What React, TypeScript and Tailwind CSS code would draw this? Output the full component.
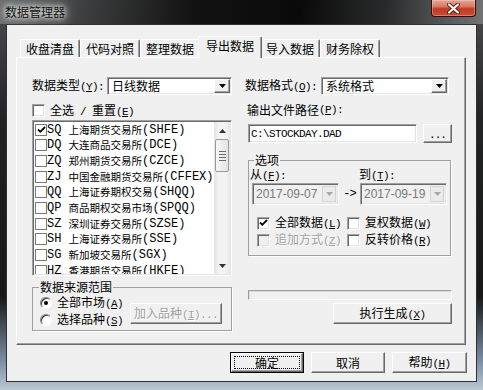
import React from "react";

const L = ({ children }: { children: React.ReactNode }) => (
  <span className="font-['Liberation_Mono',monospace] text-[11px] tracking-[-0.6px]">{children}</span>
);

const Acc = ({ k }: { k: string }) => (
  <L>
    (<span className="underline underline-offset-[1px]">{k}</span>)
  </L>
);

const SUNKEN =
  "border border-t-[#a0a0a0] border-l-[#a0a0a0] border-r-white border-b-white shadow-[inset_1px_1px_0_#696969,inset_-1px_-1px_0_#e3e3e3]";
const RAISED =
  "border border-t-white border-l-white border-r-[#696969] border-b-[#696969] shadow-[inset_-1px_-1px_0_#a0a0a0]";

function DownTri({ color = "#000" }: { color?: string }) {
  return (
    <svg width="7" height="4" viewBox="0 0 7 4">
      <path d="M0 0 H7 L3.5 4 Z" fill={color} />
    </svg>
  );
}

function UpTri() {
  return (
    <svg width="7" height="4" viewBox="0 0 7 4">
      <path d="M0 4 H7 L3.5 0 Z" fill="#333" />
    </svg>
  );
}

function Btn({ className, children }: { className: string; children: React.ReactNode }) {
  return (
    <div className={`flex items-center justify-center bg-[#f0f0f0] ${RAISED} ${className}`}>{children}</div>
  );
}

function Combo({ className, text }: { className: string; text: string }) {
  return (
    <div className={`flex items-stretch bg-white p-[1px] ${SUNKEN} ${className}`}>
      <div className="flex-1 flex items-center pl-[3px]">{text}</div>
      <div className={`w-[16px] flex items-center justify-center bg-[#f0f0f0] ${RAISED}`}>
        <DownTri />
      </div>
    </div>
  );
}

function CheckMark({ color = "#000" }: { color?: string }) {
  return (
    <svg width="9" height="8" viewBox="0 0 9 8">
      <polyline points="1,3.5 3.3,5.8 8,1" fill="none" stroke={color} strokeWidth="1.8" />
    </svg>
  );
}

function Check3d({ checked, disabled }: { checked?: boolean; disabled?: boolean }) {
  return (
    <span
      className={`shrink-0 w-[13px] h-[13px] flex items-center justify-center ${SUNKEN} ${
        disabled ? "bg-[#f0f0f0]" : "bg-white"
      }`}
    >
      {checked ? <CheckMark /> : null}
    </span>
  );
}

function ListCheck({ checked }: { checked?: boolean }) {
  return (
    <span className="shrink-0 ml-[1px] w-[12px] h-[12px] border border-[#7a7a7a] bg-white flex items-center justify-center">
      {checked ? <CheckMark /> : null}
    </span>
  );
}

function Radio({ checked }: { checked?: boolean }) {
  return (
    <span className="shrink-0 w-[12px] h-[12px] rounded-full border border-t-[#808080] border-l-[#808080] border-r-white border-b-white shadow-[inset_1px_1px_0_#404040] bg-white flex items-center justify-center">
      {checked ? <span className="w-[4px] h-[4px] rounded-full bg-black" /> : null}
    </span>
  );
}

function DateBox({ className, value }: { className: string; value: string }) {
  return (
    <div className={`h-[22px] w-[87px] flex items-stretch bg-[#f0f0f0] p-[1px] ${SUNKEN} ${className}`}>
      <div className="flex-1 flex items-center pl-[2px] font-['Liberation_Sans',sans-serif] text-[12px] text-[#7a7a7a]">
        {value}
      </div>
      <div className="w-[14px] my-[1px] mr-[1px] flex items-center justify-center bg-[#ebebeb] border border-[#d4d4d4]">
        <DownTri color="#a8a8a8" />
      </div>
    </div>
  );
}

const ITEMS: { code: string; name: string; abbr: string; checked?: boolean }[] = [
  { code: "SQ", name: "上海期货交易所", abbr: "SHFE", checked: true },
  { code: "DQ", name: "大连商品交易所", abbr: "DCE" },
  { code: "ZQ", name: "郑州期货交易所", abbr: "CZCE" },
  { code: "ZJ", name: "中国金融期货交易所", abbr: "CFFEX" },
  { code: "QQ", name: "上海证券期权交易", abbr: "SHQQ" },
  { code: "QP", name: "商品期权交易市场", abbr: "SPQQ" },
  { code: "SZ", name: "深圳证券交易所", abbr: "SZSE" },
  { code: "SH", name: "上海证券交易所", abbr: "SSE" },
  { code: "SG", name: "新加坡交易所", abbr: "SGX" },
  { code: "HZ", name: "香港期货交易所", abbr: "HKFE" },
];

const TAB =
  "mt-[3px] h-[18px] w-[60px] flex items-center justify-center bg-[#f0f0f0] border-t border-l border-r border-t-white border-l-white border-r-[#696969] shadow-[inset_-1px_0_0_#a0a0a0] rounded-t-[2px]";

export default function App() {
  return (
    <div className="w-[483px] h-[390px] overflow-hidden bg-[linear-gradient(to_bottom,#4c4e50_0%,#222324_30%,#171717_76%,#7d91a7_93%,#bcc8d4_100%)] font-['Noto_Sans_CJK_SC',sans-serif] text-[12px] leading-[14px] text-black select-none">
      {/* title bar */}
      <div className="h-[24px] flex items-start bg-[linear-gradient(95deg,#6c6e70_0%,#3c3d3e_18%,#121212_40%,#0a0a0a_62%,#2a2b2c_80%,#727476_100%)]">
        <div className="ml-[5px] mt-[5px] text-[12px] leading-[14px] text-[#111] [text-shadow:0_0_5px_#fff,0_0_9px_rgba(255,255,255,0.85),0_0_14px_rgba(255,255,255,0.6)]">
          数据管理器
        </div>
        <div className="ml-auto mr-[7px] w-[45px] h-[17px] rounded-b-[4px] border border-t-0 border-[#3a0c08] bg-[linear-gradient(to_bottom,#e6a696_0%,#d67a66_40%,#c23a22_55%,#cb4b31_100%)] shadow-[inset_0_0_0_1px_rgba(255,220,210,0.35)] flex items-center justify-center">
          <svg width="13" height="11" viewBox="0 0 13 11">
            <path d="M2 1.5 L11 9.5 M11 1.5 L2 9.5" stroke="#5a1a10" strokeWidth="4" strokeLinecap="round" />
            <path d="M2 1.5 L11 9.5 M11 1.5 L2 9.5" stroke="#ffffff" strokeWidth="2.2" strokeLinecap="round" />
          </svg>
        </div>
      </div>

      {/* client area */}
      <div className="ml-[6px] w-[471px] h-[358px] bg-[#f0f0f0] border border-[#2e3032] flex flex-col">
        {/* tabs */}
        <div className="relative z-10 mt-[11px] pl-[13px] h-[22px] flex items-start">
          <div className={TAB}>收盘清盘</div>
          <div className={TAB}>代码对照</div>
          <div className={TAB}>整理数据</div>
          <div className="relative z-10 -mx-[2px] h-[22px] w-[64px] flex justify-center pt-[2px] bg-[#f0f0f0] border-t border-l border-r border-t-white border-l-white border-r-[#696969] shadow-[inset_-1px_0_0_#a0a0a0] rounded-t-[2px]">
            导出数据
          </div>
          <div className={TAB}>导入数据</div>
          <div className={TAB}>财务除权</div>
        </div>

        {/* panel */}
        <div className={`-mt-[1px] ml-[9px] w-[450px] h-[288px] bg-[#f0f0f0] ${RAISED} pt-[19px] pl-[15px] flex gap-[13px]`}>
          {/* left column */}
          <div className="w-[200px] flex flex-col">
            <div className="h-[18px] flex items-center">
              <span className="w-[75px] whitespace-nowrap">
                数据类型<Acc k="Y" />
                <L>:</L>
              </span>
              <Combo className="w-[125px] h-[18px]" text="日线数据" />
            </div>
            <div className="mt-[9px] h-[13px] flex items-center">
              <Check3d />
              <span className="ml-[5px] whitespace-nowrap">
                全选<L> / </L>重置<Acc k="E" />
              </span>
            </div>
            <div className={`mt-[3px] h-[156px] flex bg-white p-[1px] ${SUNKEN}`}>
              <div className="flex-1 min-w-0 overflow-hidden flex flex-col">
                {ITEMS.map((it) => (
                  <div key={it.code} className="shrink-0 h-[15.67px] flex items-center whitespace-nowrap">
                    <ListCheck checked={it.checked} />
                    <span className="font-['Liberation_Mono',monospace] text-[12px]">{it.code}&nbsp;</span>
                    <span className="text-[10.5px]">{it.name}</span>
                    <span className="font-['Liberation_Mono',monospace] text-[12px]">({it.abbr})</span>
                  </div>
                ))}
              </div>
              <div className="w-[16px] flex flex-col bg-[linear-gradient(to_right,#e4e4e4,#f3f3f3_30%,#f3f3f3_70%,#e8e8e8)]">
                <div className="h-[17px] flex items-center justify-center">
                  <UpTri />
                </div>
                <div className="mx-[1px] h-[33px] rounded-[2px] border border-[#9a9a9a] bg-[linear-gradient(to_right,#f7f7f7,#e4e4e4)] flex flex-col items-center justify-center gap-[2px]">
                  <span className="w-[7px] h-[1px] bg-[#6a6a6a]" />
                  <span className="w-[7px] h-[1px] bg-[#6a6a6a]" />
                  <span className="w-[7px] h-[1px] bg-[#6a6a6a]" />
                  <span className="w-[7px] h-[1px] bg-[#6a6a6a]" />
                </div>
                <div className="flex-1" />
                <div className="h-[17px] flex items-center justify-center">
                  <DownTri color="#333" />
                </div>
              </div>
            </div>
            <fieldset className="mt-[4px] min-w-0 border border-[#a0a0a0] shadow-[1px_1px_0_#fff] pl-[7px] pr-[9px] pb-[3px]">
              <legend className="-ml-[1px] px-[1px] leading-[14px]">数据来源范围</legend>
              <div className="flex">
                <div className="flex flex-col">
                  <div className="mt-[2px] h-[14px] flex items-center">
                    <Radio checked />
                    <span className="ml-[5px] whitespace-nowrap">
                      全部市场<Acc k="A" />
                    </span>
                  </div>
                  <div className="mt-[3px] h-[14px] flex items-center">
                    <Radio />
                    <span className="ml-[5px] whitespace-nowrap">
                      选择品种<Acc k="S" />
                    </span>
                  </div>
                </div>
                <Btn className="ml-auto mt-[9px] w-[92px] h-[21px]">
                  <span className="text-[#a0a0a0] [text-shadow:1px_1px_0_#fff] whitespace-nowrap">
                    加入品种<Acc k="I" />
                    <L>...</L>
                  </span>
                </Btn>
              </div>
            </fieldset>
          </div>

          {/* right column */}
          <div className="w-[207px] flex flex-col">
            <div className="h-[18px] flex items-center">
              <span className="w-[76px] whitespace-nowrap">
                数据格式<Acc k="O" />
                <L>:</L>
              </span>
              <Combo className="w-[128px] h-[18px]" text="系统格式" />
            </div>
            <div className="mt-[8px] h-[14px] pl-[2px] flex items-center whitespace-nowrap">
              输出文件路径<Acc k="P" />
              <L>:</L>
            </div>
            <div className="mt-[7px] h-[19px] flex">
              <div className={`ml-[3px] w-[169px] h-[19px] bg-white flex items-center pl-[2px] ${SUNKEN}`}>
                <L>C:\STOCKDAY.DAD</L>
              </div>
              <Btn className="ml-[6px] w-[29px] h-[19px]">
                <span className="font-['Liberation_Mono',monospace] text-[11px] tracking-[-1px] pt-[3px]">...</span>
              </Btn>
            </div>
            <fieldset className="mt-[10px] ml-[3px] w-[203px] min-w-0 border border-[#a0a0a0] shadow-[1px_1px_0_#fff] pl-[1px] pb-[8px]">
              <legend className="ml-[4px] px-[1px] leading-[14px]">选项</legend>
              <div className="mt-[1px] h-[14px] flex items-center">
                <span className="w-[109px] whitespace-nowrap">
                  从<Acc k="F" />
                  <L>:</L>
                </span>
                <span className="whitespace-nowrap">
                  到<Acc k="T" />
                  <L>:</L>
                </span>
              </div>
              <div className="mt-[1px] h-[22px] flex items-center">
                <DateBox className="ml-[2px]" value="2017-09-07" />
                <span className="w-[21px] text-center font-['Liberation_Mono',monospace] text-[12px] tracking-[-1px]">-&gt;</span>
                <DateBox className="" value="2017-09-19" />
              </div>
              <div className="mt-[11px] h-[14px] flex items-center">
                <div className="ml-[7px] w-[90px] flex items-center">
                  <Check3d checked />
                  <span className="ml-[5px] whitespace-nowrap">
                    全部数据<Acc k="L" />
                  </span>
                </div>
                <div className="flex items-center">
                  <Check3d />
                  <span className="ml-[5px] whitespace-nowrap">
                    复权数据<Acc k="W" />
                  </span>
                </div>
              </div>
              <div className="mt-[3px] h-[14px] flex items-center">
                <div className="ml-[7px] w-[90px] flex items-center">
                  <Check3d disabled />
                  <span className="ml-[5px] whitespace-nowrap text-[#a0a0a0] [text-shadow:1px_1px_0_#fff]">
                    追加方式<Acc k="Z" />
                  </span>
                </div>
                <div className="flex items-center">
                  <Check3d />
                  <span className="ml-[5px] whitespace-nowrap">
                    反转价格<Acc k="R" />
                  </span>
                </div>
              </div>
            </fieldset>
            <div className="mt-[34px] ml-[3px] w-[204px] h-[10px] border border-t-[#a0a0a0] border-l-[#a0a0a0] border-r-white border-b-white shadow-[inset_1px_1px_0_#d8d8d8]" />
            <Btn className="mt-[3px] self-end w-[119px] h-[21px]">
              <span className="whitespace-nowrap">
                执行生成<Acc k="X" />
              </span>
            </Btn>
          </div>
        </div>

        {/* bottom buttons */}
        <div className="mt-[7px] pr-[9px] flex justify-end gap-[7px]">
          <div className="w-[74px] h-[21px] border border-black">
            <div className={`w-full h-full bg-[#f0f0f0] ${RAISED} p-[2px]`}>
              <div className="w-full h-full border border-dotted border-black flex items-center justify-center">
                确定
              </div>
            </div>
          </div>
          <Btn className="w-[74px] h-[21px]">取消</Btn>
          <Btn className="w-[75px] h-[21px]">
            <span className="whitespace-nowrap">
              帮助<Acc k="H" />
            </span>
          </Btn>
        </div>
      </div>
    </div>
  );
}
